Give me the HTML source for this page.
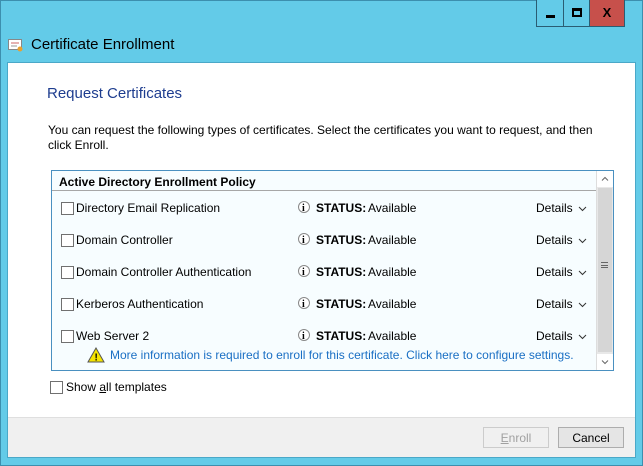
<!DOCTYPE html>
<html><head><style>
*{margin:0;padding:0;box-sizing:border-box}
body{width:643px;height:466px;overflow:hidden;background:#63cbe8;font-family:"Liberation Sans",sans-serif;font-size:12px;color:#000;position:relative}
.abs{position:absolute}
.win{left:0;top:0;width:643px;height:466px;border:1px solid #3c8fae;}
.client{left:7px;top:62px;width:629px;height:396px;background:#fff;border:1px solid #4aa8c8}
.footer{left:8px;top:417px;width:627px;height:40px;background:#f0f0f0;border-top:1px solid #dfdfdf}
.tb{top:0;height:27px;border:1px solid #2a5d73;border-top:none;background:#63cbe8}
.list{left:51px;top:170px;width:563px;height:201px;border:1px solid #4a90c0;background:#f7fdff}
.hdr{left:0;top:0;width:544px;height:20px;border-bottom:1px solid #a7a7a7;font-weight:bold;padding:4px 0 0 7px}
.row{left:0;width:544px;height:20px}
.cb{position:absolute;left:9px;top:3px;width:13px;height:13px;border:1px solid #707070;background:#fff}
.nm{position:absolute;left:24px;top:2px}
.info{position:absolute;left:245px;top:1px;width:14px;height:15px}
.st{position:absolute;left:264px;top:2px;font-weight:bold}
.av{position:absolute;left:316px;top:2px}
.dt{position:absolute;left:484px;top:2px}
.dt svg{position:absolute;left:42px;top:5px}
.btn{top:427px;width:66px;height:21px;border:1px solid #adadad;background:#e5e5e5;text-align:center;padding-top:3px}
</style></head><body>
<div class="abs win"></div>
<div class="abs tb" style="left:536px;width:28px"><div class="abs" style="left:9px;top:15px;width:9px;height:3px;background:#000"></div></div>
<div class="abs tb" style="left:563px;width:27px"><div class="abs" style="left:8px;top:8px;width:10px;height:9px;border:2px solid #000;border-top-width:3px"></div></div>
<div class="abs tb" style="left:589px;width:36px;background:#c7504b;font-weight:bold;font-size:13px;text-align:center;padding-top:5px">X</div>
<svg class="abs" style="left:8px;top:38px" width="16" height="15"><rect x="0.5" y="1.5" width="13" height="10" fill="#fff" stroke="#888"/><line x1="3" y1="5" x2="11" y2="5" stroke="#c66"/><line x1="3" y1="8" x2="9" y2="8" stroke="#999"/><circle cx="12" cy="11" r="2.5" fill="#e8a030"/></svg>
<div class="abs" style="left:31px;top:36px;font-size:15px;color:#000">Certificate Enrollment</div>
<div class="abs client"></div>
<div class="abs" style="left:47px;top:85px;font-size:15px;color:#1e3d8f">Request Certificates</div>
<div class="abs" style="left:48px;top:123px;line-height:15px">You can request the following types of certificates. Select the certificates you want to request, and then<br>click Enroll.</div>
<div class="abs list">
<div class="abs hdr">Active Directory Enrollment Policy</div>
<div class="abs" style="left:544px;top:0;width:17px;height:199px;background:#e8e8e8;border-left:1px solid #ddd">
<div class="abs" style="left:0;top:0;width:16px;height:16px;background:#fff"><svg width="16" height="16"><polyline points="5,9.5 8,6.5 11,9.5" fill="none" stroke="#666"/></svg></div>
<div class="abs" style="left:1px;top:17px;width:14px;height:164px;background:#d6d6d6"></div>
<div class="abs" style="left:4px;top:91px;width:7px;height:6px;border-top:1px solid #666;border-bottom:1px solid #666"><div style="margin-top:2px;border-top:1px solid #666"></div></div>
<div class="abs" style="left:0;top:183px;width:16px;height:16px;background:#fff"><svg width="16" height="16"><polyline points="5,6.5 8,9.5 11,6.5" fill="none" stroke="#666"/></svg></div>
</div>
<div class="abs row" style="top:28px"><div class="cb"></div><div class="nm">Directory Email Replication</div><svg class="info"><circle cx="7" cy="7" r="5.5" fill="#fff" stroke="#888"/><text x="5" y="11" font-size="10" font-family="Liberation Serif" font-weight="bold">i</text></svg><div class="st">STATUS:</div><div class="av">Available</div><div class="dt">Details<svg width="9" height="6"><polyline points="1,1 4.5,4.5 8,1" fill="none" stroke="#333"/></svg></div></div>
<div class="abs row" style="top:60px"><div class="cb"></div><div class="nm">Domain Controller</div><svg class="info"><circle cx="7" cy="7" r="5.5" fill="#fff" stroke="#888"/><text x="5" y="11" font-size="10" font-family="Liberation Serif" font-weight="bold">i</text></svg><div class="st">STATUS:</div><div class="av">Available</div><div class="dt">Details<svg width="9" height="6"><polyline points="1,1 4.5,4.5 8,1" fill="none" stroke="#333"/></svg></div></div>
<div class="abs row" style="top:92px"><div class="cb"></div><div class="nm">Domain Controller Authentication</div><svg class="info"><circle cx="7" cy="7" r="5.5" fill="#fff" stroke="#888"/><text x="5" y="11" font-size="10" font-family="Liberation Serif" font-weight="bold">i</text></svg><div class="st">STATUS:</div><div class="av">Available</div><div class="dt">Details<svg width="9" height="6"><polyline points="1,1 4.5,4.5 8,1" fill="none" stroke="#333"/></svg></div></div>
<div class="abs row" style="top:124px"><div class="cb"></div><div class="nm">Kerberos Authentication</div><svg class="info"><circle cx="7" cy="7" r="5.5" fill="#fff" stroke="#888"/><text x="5" y="11" font-size="10" font-family="Liberation Serif" font-weight="bold">i</text></svg><div class="st">STATUS:</div><div class="av">Available</div><div class="dt">Details<svg width="9" height="6"><polyline points="1,1 4.5,4.5 8,1" fill="none" stroke="#333"/></svg></div></div>
<div class="abs row" style="top:156px"><div class="cb"></div><div class="nm">Web Server 2</div><svg class="info"><circle cx="7" cy="7" r="5.5" fill="#fff" stroke="#888"/><text x="5" y="11" font-size="10" font-family="Liberation Serif" font-weight="bold">i</text></svg><div class="st">STATUS:</div><div class="av">Available</div><div class="dt">Details<svg width="9" height="6"><polyline points="1,1 4.5,4.5 8,1" fill="none" stroke="#333"/></svg></div></div>
<svg class="abs" style="left:35px;top:176px" width="18" height="16"><polygon points="9,1 17,15 1,15" fill="#f5e400" stroke="#555"/><text x="7.5" y="13.5" font-size="10" font-weight="bold" font-family="Liberation Sans">!</text></svg>
<div class="abs" style="left:58px;top:177px;color:#1a6fc4">More information is required to enroll for this certificate. Click here to configure settings.</div>
</div>
<div class="abs" style="left:50px;top:381px;width:13px;height:13px;border:1px solid #707070;background:#fff"></div>
<div class="abs" style="left:66px;top:380px">Show <u>a</u>ll templates</div>
<div class="abs footer"></div>
<div class="abs btn" style="left:483px;color:#a0a0a0;background:#f0f0f0;border-color:#ccc"><u>E</u>nroll</div>
<div class="abs btn" style="left:558px">Cancel</div>
</body></html>
